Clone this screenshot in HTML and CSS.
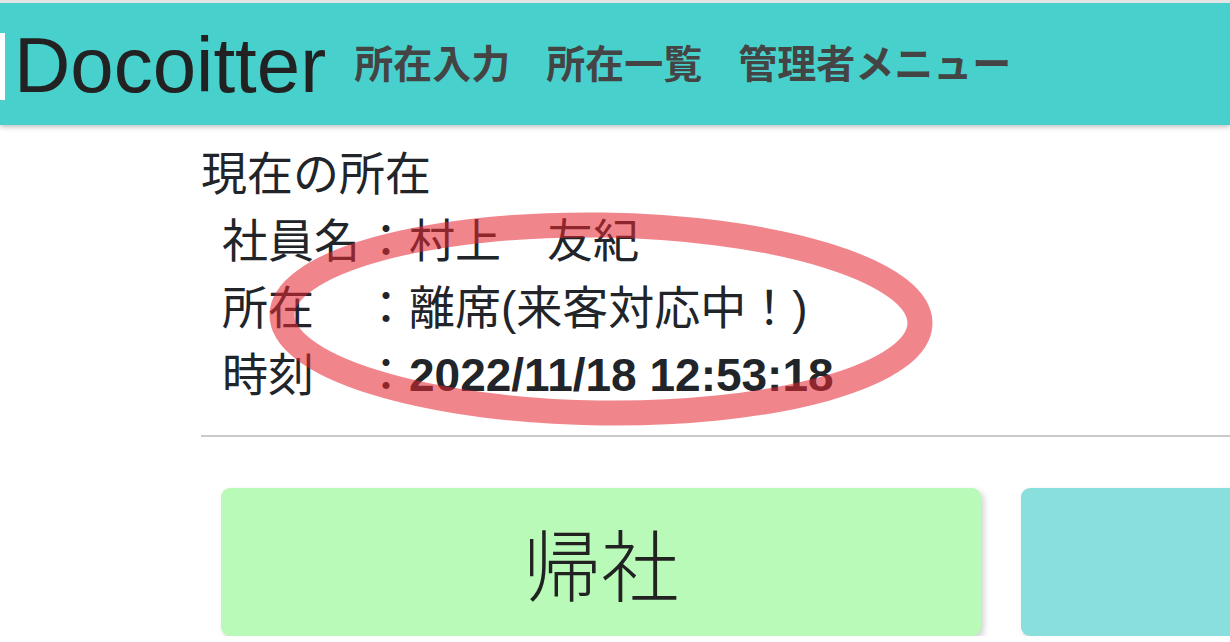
FILE: index.html
```html
<!DOCTYPE html>
<html lang="ja">
<head>
    <meta charset="UTF-8">
    <meta name="viewport" content="width=device-width, initial-scale=1.0">
    <link rel="stylesheet" href="styles.css">
    <title>Docoitter</title>
</head>
<body>

    <header class="site-header">
        <div class="logo-mark"></div>
        <h1 class="brand">Docoitter</h1>
        <nav class="nav">
            <a href="#">所在入力</a>
            <a href="#">所在一覧</a>
            <a href="#">管理者メニュー</a>
        </nav>
    </header>

    <main class="main">
        <section class="status">
            <h2 class="status-title">現在の所在</h2>
            <div class="status-row">
                <span class="status-label">社員名</span><span class="status-sep">：</span><span class="status-value">村上　友紀</span>
            </div>
            <div class="status-row">
                <span class="status-label">所在</span><span class="status-sep">：</span><span class="status-value">離席(来客対応中！)</span>
            </div>
            <div class="status-row">
                <span class="status-label">時刻</span><span class="status-sep">：</span><span class="status-value status-time">2022/11/18 12:53:18</span>
            </div>
        </section>

        <hr class="divider">

        <div class="actions">
            <button class="action-btn btn-return">帰社</button>
            <button class="action-btn btn-other"></button>
        </div>
    </main>

    <!-- 手書きの丸囲み -->
    <svg class="annotation" width="1230" height="642" viewBox="0 0 1230 642">
        <ellipse cx="601" cy="319" rx="319" ry="94" transform="rotate(0.8 601 319)"></ellipse>
    </svg>

</body>
</html>
```

FILE: styles.css
```css
body {
    margin: 0;
    font-family: 'Liberation Sans', 'Noto Sans CJK JP', sans-serif;
    background-color: #fff;
    color: #212529;
    overflow: hidden;
}
.site-header {
    display: flex;
    align-items: center;
    height: 122px;
    border-top: 3px solid #e4e4e4;
    background-color: #48d1cc;
    box-shadow: 0 2px 5px rgba(0, 0, 0, 0.25);
}
.logo-mark {
    width: 5px;
    height: 67px;
    margin-top: 4px;
    background-color: #fff;
}
.brand {
    margin: 2px 0 0 9px;
    font-size: 78px;
    font-weight: 400;
    color: #222;
}
.nav {
    display: flex;
    gap: 36px;
    margin: 0 0 6px 28px;
}
.nav a {
    font-family: 'Noto Sans CJK JP', sans-serif;
    font-size: 39px;
    font-weight: 700;
    color: #444;
    text-decoration: none;
}
.main {
    width: 1400px;
    margin: 16px 0 0 201px;
}
.status-title {
    margin: 0;
    font-size: 46px;
    font-weight: 400;
    line-height: 67px;
}
.status-row {
    display: flex;
    font-size: 46px;
    line-height: 67px;
    padding-left: 21px;
}
.status-label {
    width: calc(3em + 3px);
}
.status-time {
    font-weight: 700;
}
.divider {
    margin: 26px 0 0;
    border: 0;
    border-top: 2px solid #cacaca;
}
.actions {
    display: flex;
    gap: 40px;
    margin: 51px 0 0 20px;
}
.action-btn {
    flex: 0 0 760px;
    height: 148px;
    border: 0;
    border-radius: 9px;
    font-family: 'Liberation Sans', 'Noto Sans CJK JP', sans-serif;
    font-size: 78px;
    font-weight: 300;
    color: #222;
    box-shadow: 3px 3px 6px rgba(0, 0, 0, 0.18);
}
.btn-return {
    background-color: #bafab8;
}
.btn-other {
    background-color: #89dfdc;
}
.annotation {
    position: absolute;
    top: 0;
    left: 0;
    pointer-events: none;
}
.annotation ellipse {
    fill: none;
    stroke: rgba(228, 40, 50, 0.56);
    stroke-width: 25;
}
```
